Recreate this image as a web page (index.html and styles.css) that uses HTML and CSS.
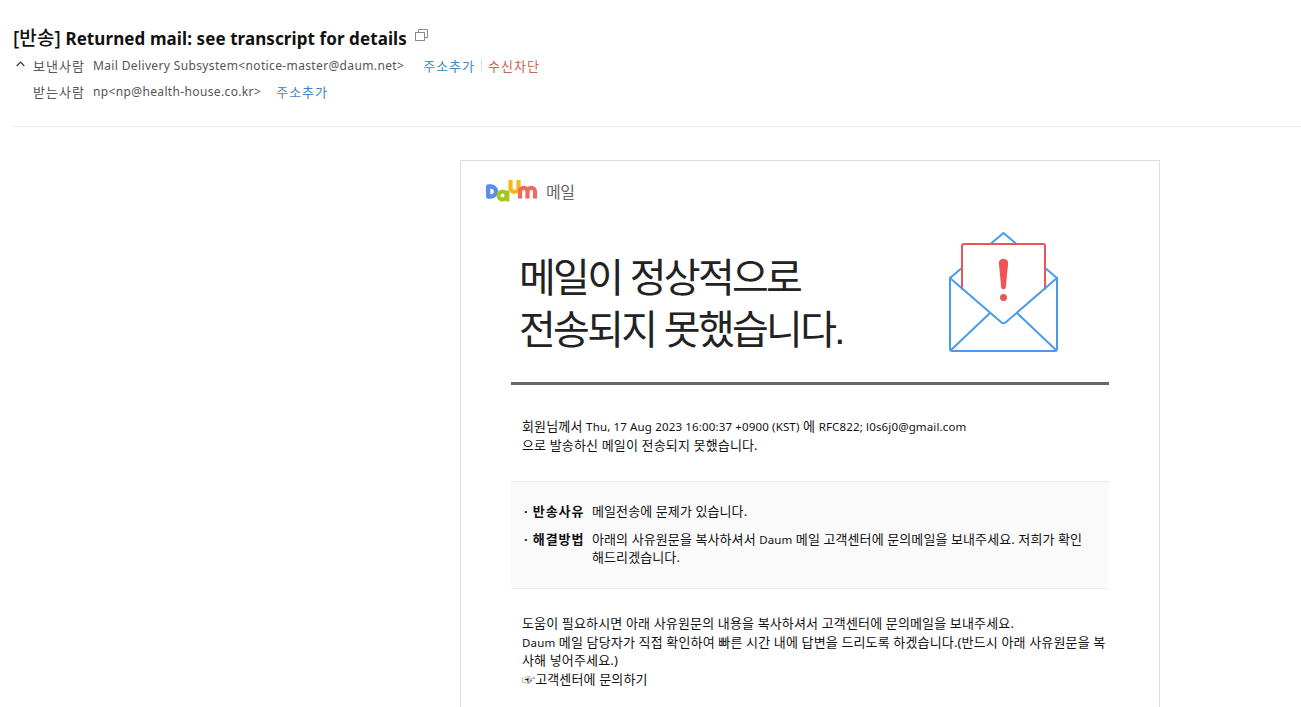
FILE: index.html
```html
<!DOCTYPE html>
<html lang="ko">
<head>
  <meta charset="UTF-8">
  <title>[반송] Returned mail: see transcript for details</title>
  <link rel="stylesheet" href="styles.css">
</head>
<body>
  <div class="mail-head">
    <h1 class="subject">
      <span><span class="subject-tag">[반송]</span> Returned mail: see transcript for details</span>
      <svg class="copy-icon" width="13" height="13" viewBox="0 0 13 13" fill="none" stroke="#8a8a8a">
        <path d="M3.500 3.500V.5h9v8h-3"/>
        <rect x=".5" y="3.500" width="9" height="8"/>
      </svg>
    </h1>
    <div class="addr-row">
      <svg class="fold-icon" width="9" height="6" viewBox="0 0 9 6" fill="none" stroke="#333" stroke-width="1.2">
        <path d="M.7 5 4.500 1.200 8.300 5"/>
      </svg>
      <span class="addr-label">보낸사람</span>
      <span class="addr-value">Mail Delivery Subsystem&lt;notice-master@daum.net&gt;</span>
      <a class="link add-first">주소추가</a>
      <span class="divider"></span>
      <a class="link block">수신차단</a>
    </div>
    <div class="addr-row">
      <span class="addr-label">받는사람</span>
      <span class="addr-value">np&lt;np@health-house.co.kr&gt;</span>
      <a class="link add-second">주소추가</a>
    </div>
  </div>

  <div class="mail-card">
    <div class="brand">
      <svg width="54" height="24" viewBox="0 0 54 24" fill="none">
        <path d="M2.200 6.500h2.800a5 5 0 0 1 0 10H2.200z" stroke="#5b8def" stroke-width="4.400" stroke-linejoin="round"/>
        <circle cx="16.500" cy="15.500" r="4" stroke="#a6c61c" stroke-width="4"/>
        <path d="M21.500 10.500V21.500" stroke="#a6c61c" stroke-width="3.800"/>
        <path d="M24.500 0v8a4 4 0 0 0 8 0V0" stroke="#f5b915" stroke-width="4.200"/>
        <path d="M34 18.500v-7a3.700 3.700 0 0 1 7.500 0v7m0-7a3.700 3.700 0 0 1 7.500 0v7" stroke="#ec6a5e" stroke-width="4.200"/>
      </svg>
      <span class="brand-name">메일</span>
    </div>

    <div class="hero">
      <h2 class="hero-title">메일이 정상적으로<br>전송되지 못했습니다.</h2>
      <svg class="hero-icon" width="112" height="122" viewBox="0 0 112 122" fill="none" stroke-linejoin="round" stroke-linecap="round">
        <path d="M2 46 55.500 1 109 46" stroke="#4a9bea" stroke-width="2"/>
        <path d="M14 57V14q0-2 2-2h79q2 0 2 2v43l-41 35z" fill="#fff"/>
        <path d="M14 57V14q0-2 2-2h79q2 0 2 2v43" stroke="#e8555b" stroke-width="2"/>
        <path d="M55.500 27c-3.500 0-4.800 2-4.600 4.500l2.300 24c.2 2.300 4.400 2.300 4.600 0l2.300-24c.2-2.500-1.100-4.500-4.600-4.500z" fill="#ee5555"/>
        <circle cx="55.500" cy="65.500" r="3.500" fill="#ee5555"/>
        <path d="M2 46v71q0 2 2 2h103q2 0 2-2V46L57.500 90.500q-2 1.500-4 0z" stroke="#4a9bea" stroke-width="2"/>
        <path d="M3 118 42 81M108 118 69 81" stroke="#4a9bea" stroke-width="2"/>
      </svg>
    </div>

    <div class="notice">
      회원님께서 <span class="latin">Thu, 17 Aug 2023 16:00:37 +0900 (KST)</span> 에 <span class="latin">RFC822; l0s6j0@gmail.com</span><br>
      으로 발송하신 메일이 전송되지 못했습니다.
    </div>

    <div class="reason-box">
      <div class="reason">
        <span class="reason-key">· 반송사유</span>
        <span class="reason-text">메일전송에 문제가 있습니다.</span>
      </div>
      <div class="reason">
        <span class="reason-key">· 해결방법</span>
        <span class="reason-text">아래의 사유원문을 복사하셔서 <span class="latin">Daum</span> 메일 고객센터에 문의메일을 보내주세요. 저희가 확인<br>해드리겠습니다.</span>
      </div>
    </div>

    <div class="notice help">
      도움이 필요하시면 아래 사유원문의 내용을 복사하셔서 고객센터에 문의메일을 보내주세요.<br>
      <span class="latin">Daum</span> 메일 담당자가 직접 확인하여 빠른 시간 내에 답변을 드리도록 하겠습니다.(반드시 아래 사유원문을 복<br>
      사해 넣어주세요.)<br>
      ☞고객센터에 문의하기
    </div>
  </div>
</body>
</html>
```

FILE: styles.css
```css
* {
  box-sizing: border-box;
}
html, body {
  height: 707px;
  overflow: hidden;
}
body {
  margin: 0;
  background: #fff;
  color: #222;
  font-family: "Noto Sans", "Noto Sans CJK KR", sans-serif;
  font-size: 12px;
}
.mail-head {
  margin-left: 12px;
  height: 127px;
  padding-top: 25px;
  border-bottom: 1px solid #eee;
}
.subject {
  display: flex;
  align-items: flex-start;
  margin: 0;
  padding-left: 1px;
  height: 27px;
  font-size: 17px;
  line-height: 27px;
  font-weight: 700;
  letter-spacing: .09px;
  color: #111;
}
.subject-tag {
  font-size: 19px;
  font-weight: 500;
  line-height: 1;
}
.copy-icon {
  margin: 4px 0 0 8px;
}
.addr-row {
  display: flex;
  align-items: center;
  height: 26px;
  padding-left: 21px;
  position: relative;
}
.fold-icon {
  position: absolute;
  left: 4px;
  top: 9px;
}
.addr-label {
  width: 60px;
  font-size: 13px;
  letter-spacing: 1px;
  color: #555;
  white-space: nowrap;
}
.addr-value {
  letter-spacing: .36px;
  color: #555;
}
.link {
  font-size: 13px;
  letter-spacing: 1px;
  color: #3f86c4;
}
.add-first {
  margin-left: 19px;
}
.add-second {
  margin-left: 15px;
}
.divider {
  width: 1px;
  height: 12px;
  margin: 0 6px;
  background: #ddd;
}
.block {
  color: #c9634e;
}
.mail-card {
  width: 700px;
  margin: 33px 0 0 460px;
  padding: 0 50px 40px;
  border: 1px solid #ddd;
  color: #111;
}
.brand {
  display: flex;
  align-items: center;
  gap: 6px;
  margin: 19px 0 0 -25px;
  height: 24px;
}
.brand-name {
  margin-bottom: 2px;
  font-size: 16px;
  letter-spacing: -.5px;
  color: #666;
}
.hero {
  display: flex;
  justify-content: space-between;
  height: 181px;
  padding: 28px 49px 0 8px;
  border-bottom: 3px solid #666;
}
.hero-title {
  margin: 20px 0 0;
  font-family: "Liberation Sans", "Noto Sans CJK KR", sans-serif;
  font-size: 40px;
  line-height: 52px;
  font-weight: 400;
  letter-spacing: -2.7px;
  color: #222;
}
.hero-icon {
  flex-shrink: 0;
}
.notice {
  padding: 32px 11px 0;
  line-height: 19px;
  font-size: 13px;
  letter-spacing: .15px;
  white-space: nowrap;
}
.latin {
  font-size: 11.5px;
  line-height: 1;
}
.reason-box {
  margin-top: 26px;
  padding: 20px 11px 14px;
  height: 108px;
  font-size: 13px;
  letter-spacing: .1px;
  background: #fafafa;
  border-top: 1px solid #eee;
  border-bottom: 1px solid #eee;
}
.reason {
  display: flex;
  line-height: 18px;
  margin-bottom: 10px;
}
.reason-key {
  flex: 0 0 70px;
  padding-left: 2px;
  font-weight: 700;
  letter-spacing: .9px;
  white-space: nowrap;
}
.help {
  padding-top: 25px;
  line-height: 18.500px;
}
```
